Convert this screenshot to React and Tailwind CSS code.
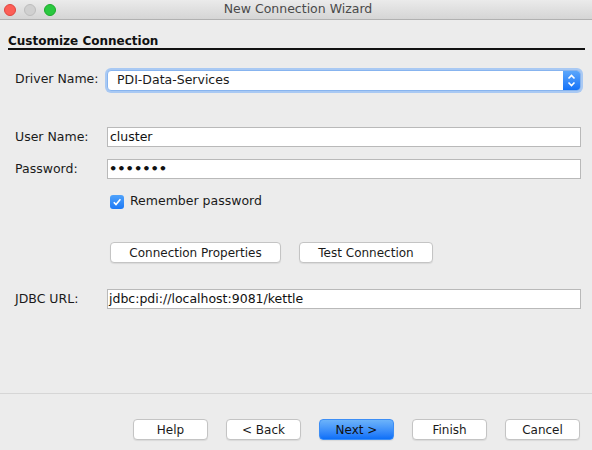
import React from 'react';

const font = { fontFamily: '"DejaVu Sans", "Liberation Sans", sans-serif' };

function MacButton({ children, primary, className = '' }) {
  const base = primary
    ? 'bg-gradient-to-b from-[#6cb3fa] to-[#0a6ff8] border-[#3d8ef5] text-[#111]'
    : 'bg-white border-[#c4c4c4] text-[#1a1a1a]';
  return (
    <button
      className={`h-[21px] rounded-[4px] border text-[12px] leading-none shadow-[0_1px_1px_rgba(0,0,0,0.08)] ${base} ${className}`}
    >
      {children}
    </button>
  );
}

function Field({ children, className = '' }) {
  return (
    <div className={`h-[20px] flex-1 bg-white border border-[#b9b9b9] flex items-center text-[12.5px] text-[#111] ${className}`}>
      {children}
    </div>
  );
}

export default function App() {
  return (
    <div className="w-[592px] h-[450px] bg-[#ececec] flex flex-col overflow-hidden" style={font}>
      {/* title bar */}
      <div className="h-[20px] shrink-0 bg-gradient-to-b from-[#ebebeb] to-[#d5d5d5] border-b border-[#b1b1b1] flex items-center relative">
        <div className="flex items-center gap-[8px] pl-[4px]">
          <span className="w-[12px] h-[12px] rounded-full bg-[#fc5f57] border border-[#e0443e]" />
          <span className="w-[12px] h-[12px] rounded-full bg-[#d0d0d0] border border-[#bdbdbd]" />
          <span className="w-[12px] h-[12px] rounded-full bg-[#2ac840] border border-[#1aab29]" />
        </div>
        <div className="absolute inset-0 flex items-center justify-center text-[12.5px] text-[#4a4a4a] pl-[4px]">
          New Connection Wizard
        </div>
      </div>

      {/* heading */}
      <div className="mx-[8px] mt-[13px] border-b-[2px] border-[#111] w-[577px] leading-[14px]">
        <span className="text-[12px] font-bold text-[#111]">Customize Connection</span>
      </div>

      <div className="flex flex-col pl-[15px] pr-[11px] text-[12.5px] text-[#1a1a1a]">
        {/* driver */}
        <div className="flex items-center mt-[20px] h-[21px]">
          <span className="w-[92px] -mt-[2px]">Driver Name:</span>
          <div className="flex-1 h-[21px] flex rounded-[4px] border border-[#87b4ef] shadow-[0_0_0_2px_#a9c9f3] bg-white">
            <span className="flex-1 pl-[9px] flex items-center text-[12.5px]">PDI-Data-Services</span>
            <div className="w-[17px] h-full rounded-r-[3px] bg-gradient-to-b from-[#5aa6fb] to-[#1172f8] flex items-center justify-center">
              <svg width="9" height="13" viewBox="0 0 9 13" fill="none" stroke="white" strokeWidth="1.6">
                <path d="M1.5 4.5 L4.5 1.5 L7.5 4.5" />
                <path d="M1.5 8.5 L4.5 11.5 L7.5 8.5" />
              </svg>
            </div>
          </div>
        </div>

        {/* user */}
        <div className="flex items-center mt-[36px]">
          <span className="w-[92px]">User Name:</span>
          <Field className="pl-[2px]">cluster</Field>
        </div>

        {/* password */}
        <div className="flex items-center mt-[12px]">
          <span className="w-[92px]">Password:</span>
          <Field className="pl-[1px] text-[13px] font-bold">•••••••</Field>
        </div>

        {/* remember */}
        <div className="flex items-center mt-[15px] pl-[95px] h-[15px]">
          <span className="w-[14px] h-[14px] rounded-[3px] bg-gradient-to-b from-[#4fa2fb] to-[#1b78f5] flex items-center justify-center">
            <svg width="10" height="10" viewBox="0 0 10 10" fill="none" stroke="white" strokeWidth="1.6">
              <path d="M1.8 5.2 L4 7.6 L8.4 2.2" />
            </svg>
          </span>
          <span className="ml-[6px]">Remember password</span>
        </div>

        {/* buttons */}
        <div className="flex items-center mt-[33px] pl-[95px] gap-[18px]">
          <MacButton className="w-[171px]">Connection Properties</MacButton>
          <MacButton className="w-[134px]">Test Connection</MacButton>
        </div>

        {/* jdbc */}
        <div className="flex items-center mt-[26px]">
          <span className="w-[92px]">JDBC URL:</span>
          <Field className="pl-[1px]">jdbc:pdi://localhost:9081/kettle</Field>
        </div>
      </div>

      <div className="flex-1" />
      <div className="h-[1px] bg-[#d6d6d6] mb-[25px]" />

      <div className="flex justify-end gap-[18px] pr-[12px] mb-[10px]">
        <MacButton className="w-[75px]">Help</MacButton>
        <MacButton className="w-[75px]">&lt; Back</MacButton>
        <MacButton primary className="w-[75px]">Next &gt;</MacButton>
        <MacButton className="w-[75px]">Finish</MacButton>
        <MacButton className="w-[75px]">Cancel</MacButton>
      </div>
    </div>
  );
}
